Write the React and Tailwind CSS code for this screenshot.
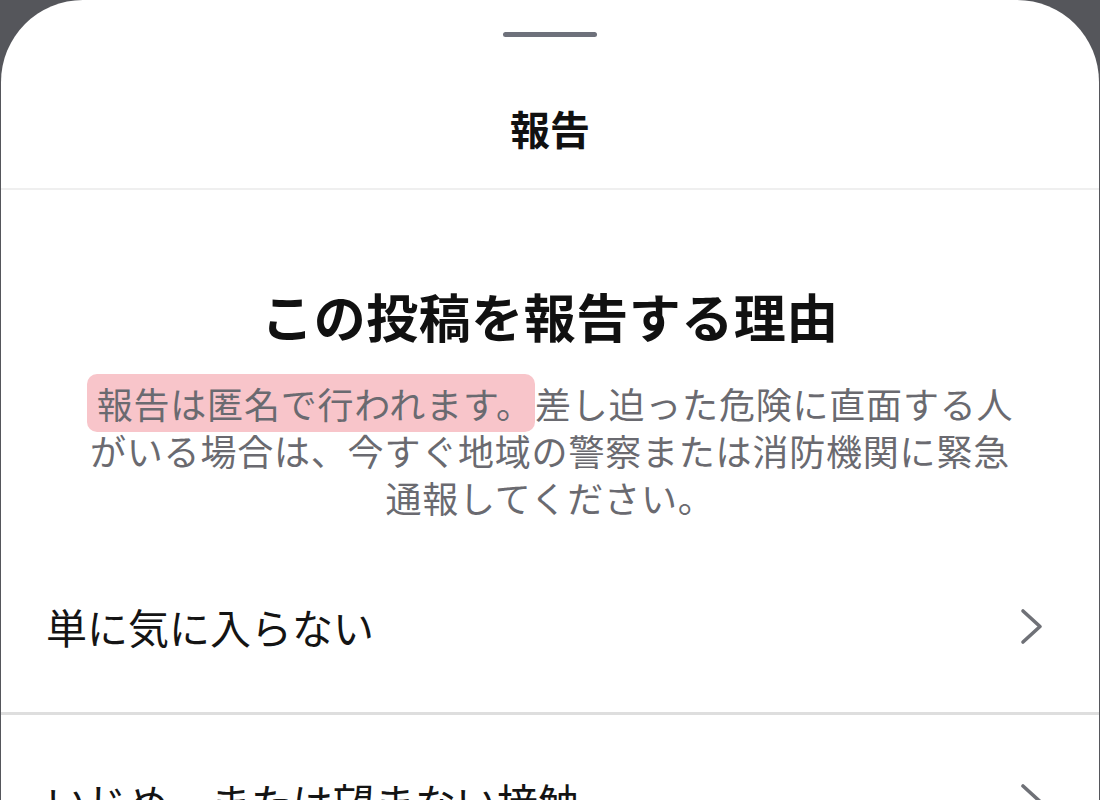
const font = { fontFamily: '"Noto Sans CJK JP", "Noto Sans", sans-serif' };

function Chevron() {
  return (
    <svg width="28" height="40" viewBox="0 0 28 40" className="shrink-0">
      <polyline
        points="5,5 22,20.5 5,36"
        fill="none"
        stroke="#6f7177"
        strokeWidth="3.6"
        strokeLinecap="round"
        strokeLinejoin="round"
      />
    </svg>
  );
}

function ReasonRow({ label, last }) {
  return (
    <div
      className={`flex items-center justify-between pl-[45px] pr-[53px] py-[62px] ${last ? "" : "border-b-[3px] border-[#dedede]"}`}
    >
      <span className="text-[41px] leading-[48px] text-[#141414]">{label}</span>
      <Chevron />
    </div>
  );
}

export default function App() {
  const reasons = ["単に気に入らない", "いじめ、または望まない接触", "自殺、自傷行為、摂食障害"];

  return (
    <div className="w-[1100px] h-[800px] overflow-hidden bg-[#55565b]" style={font}>
      <div className="mx-[1px] h-full bg-white rounded-t-[82px]">
        {/* Drag handle */}
        <div className="pt-[32px] flex justify-center">
          <div className="w-[94px] h-[5px] rounded-full bg-[#6e717b]" />
        </div>

        {/* Sheet title */}
        <div className="mt-[66px] pb-[35px] border-b-2 border-[#efefef] text-center">
          <h2 className="text-[40px] leading-[50px] font-bold text-[#111]">報告</h2>
        </div>

        {/* Intro */}
        <div className="pt-[96px] px-[76px] text-center">
          <h1 className="text-[52px] leading-[60px] font-bold text-[#111] tracking-[0.5px]">
            この投稿を報告する理由
          </h1>
          <p className="mt-[34px] text-[36px] leading-[47px] text-[#6a6a70] tracking-[0.8px]">
            <span className="bg-[#f8c5ca] rounded-[10px] pl-[10px] pr-[2px] py-[3px]">報告は匿名で行われます。</span>
            差し迫った危険に直面する人がいる場合は、今すぐ地域の警察または消防機関に緊急通報してください。
          </p>
        </div>

        {/* Reasons */}
        <div className="mt-[19px]">
          {reasons.map((r, i) => (
            <ReasonRow key={r} label={r} last={i === reasons.length - 1} />
          ))}
        </div>
      </div>
    </div>
  );
}
